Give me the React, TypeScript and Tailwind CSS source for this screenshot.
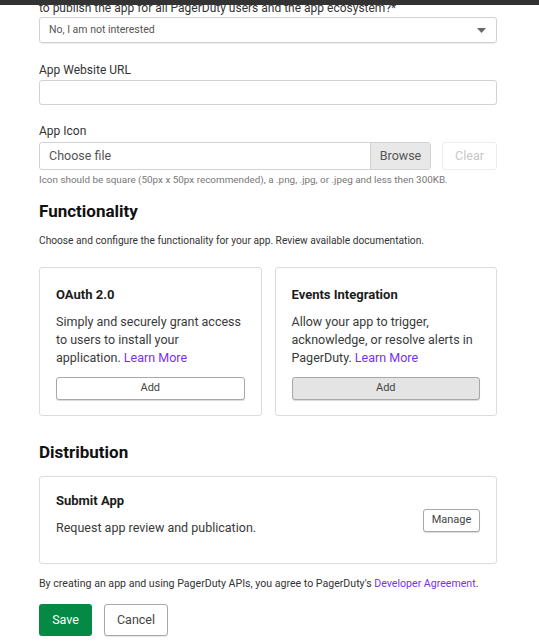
const linkCls = 'text-[#7a2ff0]';

function FeatureCard({ title, children, shaded }: { title: string; children: React.ReactNode; shaded?: boolean }) {
  return (
    <div className="flex-1 border border-[#dcdcdc] rounded-[3px] px-[16px] pt-[19px] pb-[15px] flex flex-col">
      <h3 className="text-[13px] leading-[16px] font-bold text-[#1c1c1c]">{title}</h3>
      <p className="mt-[10px] text-[12.5px] leading-[18px] text-[#3a3a3a]">{children}</p>
      <button
        className={`mt-auto h-[23px] w-full rounded-[3px] border border-[#a8a8a8] text-[11px] text-[#444] shadow-[0_1px_1px_rgba(0,0,0,0.15)] ${
          shaded ? 'bg-[#e4e4e4]' : 'bg-white'
        }`}
      >
        Add
      </button>
    </div>
  );
}

export default function App() {
  return (
    <div className="relative min-h-[641px] bg-white overflow-hidden font-['Roboto',sans-serif] text-[#333]">
      {/* top chrome bar */}
      <div className="absolute top-0 left-0 right-0 h-[5px] bg-[#333] z-10" />

      <div className="ml-[39px] w-[458px] flex flex-col">
        <label className="mt-[1px] text-[12px] leading-[14px] text-[#333]">
          to publish the app for all PagerDuty users and the app ecosystem?*
        </label>
        <div className="mt-[2px] h-[26px] border border-[#d2d2d2] rounded-[3px] shadow-[0_1px_1px_rgba(0,0,0,0.08)] flex items-center justify-between pl-[9px] pr-[10px]">
          <span className="text-[10.5px] text-[#555]">No, I am not interested</span>
          <svg width="9" height="5" viewBox="0 0 9 5">
            <path d="M0 0h9L4.5 5z" fill="#666" />
          </svg>
        </div>

        <label className="mt-[19px] text-[12px] leading-[16px]">App Website URL</label>
        <input className="mt-[2px] h-[25px] border border-[#d2d2d2] rounded-[3px] outline-none px-2" />

        <label className="mt-[18px] text-[12px] leading-[16px]">App Icon</label>
        <div className="mt-[3px] h-[28px] flex items-stretch">
          <div className="w-[392px] flex border border-[#d2d2d2] rounded-[3px] overflow-hidden">
            <div className="flex-1 flex items-center pl-[9px] text-[12.5px] text-[#555]">Choose file</div>
            <div className="w-[60px] bg-[#e8e8e8] border-l border-[#d2d2d2] flex items-center justify-center text-[12.5px] text-[#555]">
              Browse
            </div>
          </div>
          <button className="ml-[11px] flex-1 border border-[#ececec] rounded-[3px] text-[12.5px] text-[#c8c8c8]">
            Clear
          </button>
        </div>
        <p className="mt-[3px] text-[9.9px] leading-[14px] text-[#777]">
          Icon should be square (50px x 50px recommended), a .png, .jpg, or .jpeg and less then 300KB.
        </p>

        <h2 className="mt-[13px] text-[17px] leading-[22px] font-bold text-[#111]">Functionality</h2>
        <p className="mt-[12px] text-[10.2px] leading-[14px] text-[#333]">
          Choose and configure the functionality for your app. Review available documentation.
        </p>

        <div className="mt-[19px] h-[149px] flex gap-[13px]">
          <FeatureCard title="OAuth 2.0">
            Simply and securely grant access to users to install your application.{' '}
            <span className={linkCls}>Learn More</span>
          </FeatureCard>
          <FeatureCard title="Events Integration" shaded>
            Allow your app to trigger, acknowledge, or resolve alerts in PagerDuty.{' '}
            <span className={linkCls}>Learn More</span>
          </FeatureCard>
        </div>

        <h2 className="mt-[25px] text-[17px] leading-[22px] font-bold text-[#111]">Distribution</h2>
        <div className="mt-[13px] h-[88px] border border-[#dcdcdc] rounded-[3px] px-[16px] pt-[16px] flex justify-between">
          <div>
            <h3 className="text-[13px] leading-[16px] font-bold text-[#1c1c1c]">Submit App</h3>
            <p className="mt-[11px] text-[12.5px] leading-[16px] text-[#3a3a3a]">Request app review and publication.</p>
          </div>
          <button className="mt-[16px] h-[23px] w-[57px] rounded-[3px] border border-[#a8a8a8] bg-white text-[11px] text-[#444] shadow-[0_1px_1px_rgba(0,0,0,0.15)]">
            Manage
          </button>
        </div>

        <p className="mt-[13px] text-[10.6px] leading-[14px] text-[#333]">
          By creating an app and using PagerDuty APIs, you agree to PagerDuty's{' '}
          <span className={linkCls}>Developer Agreement</span>.
        </p>

        <div className="mt-[13px] flex gap-[12px]">
          <button className="h-[32px] w-[53px] rounded-[3px] bg-[#048a44] text-white text-[12.5px]">Save</button>
          <button className="h-[32px] w-[64px] rounded-[3px] border border-[#a8a8a8] bg-white text-[12.5px] text-[#444] shadow-[0_1px_1px_rgba(0,0,0,0.1)]">
            Cancel
          </button>
        </div>
      </div>
    </div>
  );
}
